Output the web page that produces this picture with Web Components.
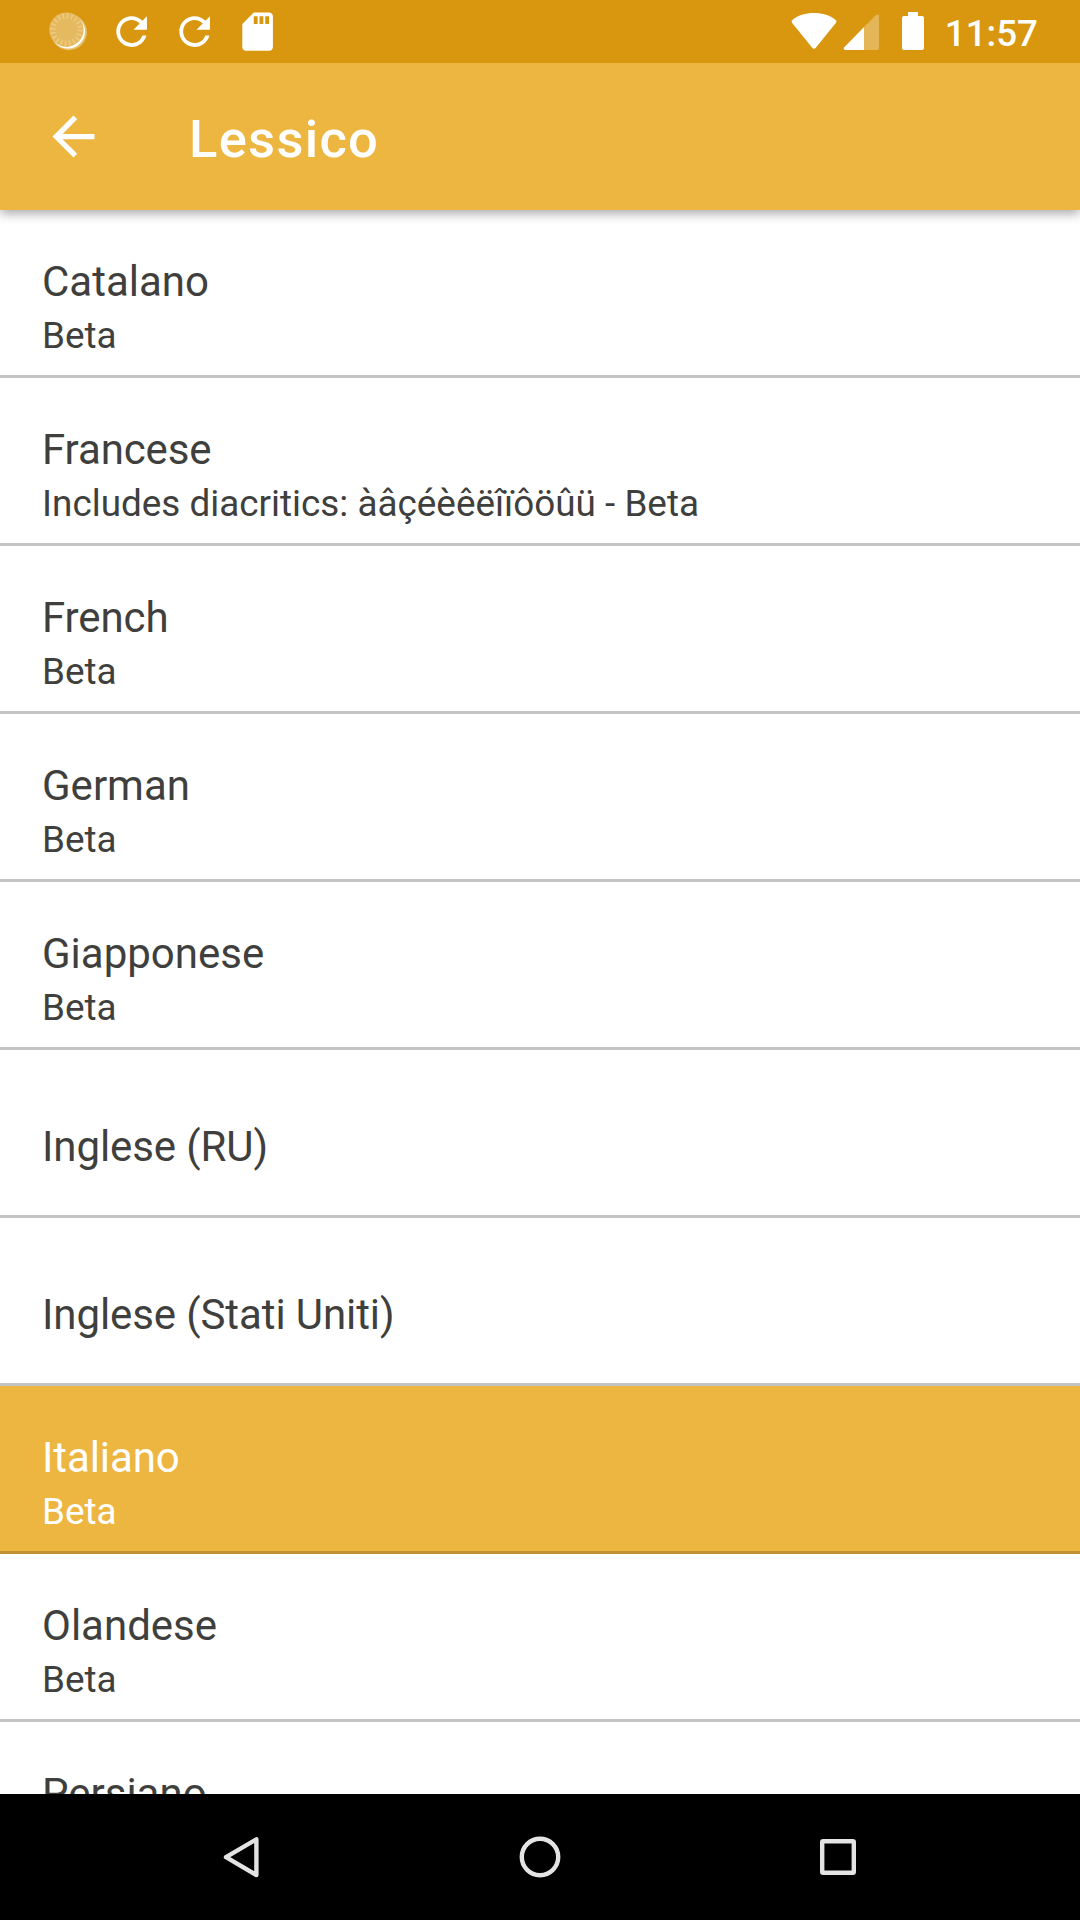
<!DOCTYPE html>
<html lang="it">
<head>
<meta charset="utf-8">
<title>Lessico</title>
<style>
html,body{margin:0;height:100%;overflow:hidden;background:#fff}
body{font-family:Roboto,"Noto Sans",sans-serif}
</style>
</head>
<body>
<lex-screen></lex-screen>
<script>
const define = (name, html) => customElements.define(name, class extends HTMLElement {
  constructor() {
    super();
    const t = document.createElement('template');
    t.innerHTML = html;
    this.attachShadow({ mode: 'open' }).appendChild(t.content.cloneNode(true));
  }
});

define('refresh-icon', `<style>:host{display:block;width:46px;height:46px}svg{display:block}</style>
<svg width="46" height="46" viewBox="0 0 24 24" fill="#fff"><path d="M17.65 6.35C16.2 4.9 14.21 4 12 4c-4.42 0-7.99 3.58-7.99 8s3.57 8 7.99 8c3.73 0 6.84-2.55 7.73-6h-2.08c-.82 2.33-3.04 4-5.65 4-3.31 0-6-2.69-6-6s2.69-6 6-6c1.66 0 3.14.69 4.22 1.78L13 11h7V4z"/></svg>`);

define('dial-icon', `<style>:host{display:block;width:46px;height:46px}svg{display:block}</style>
<svg width="46" height="46" viewBox="0 0 46 46">
<circle cx="23.3" cy="23.6" r="18" fill="#fff" opacity=".4"/>
<circle cx="22.300" cy="22.8" r="17.2" fill="#fff"/>
<circle cx="20.8" cy="21.1" r="17.2" fill="#e5b95f"/>
<circle cx="20.8" cy="21.1" r="13.6" fill="none" stroke="#eecb83" stroke-width="5.500" stroke-dasharray="1.500 2.773"/>
</svg>`);

define('status-bar', `<style>
:host{display:flex;box-sizing:border-box;height:63px;flex:none;background:#d8970f;padding:8px 42px 0 45px;justify-content:space-between;align-items:flex-start;position:relative;z-index:2}
.l{display:flex;gap:17px;transform:translate(.6px,.6px)}.r{display:flex;align-items:flex-start}
svg{display:block}
.t{font-size:36.75px;font-weight:500;line-height:43px;color:#fff;margin:4px 0 0 18.6px}
</style>
<div class="l"><dial-icon></dial-icon><refresh-icon></refresh-icon><refresh-icon></refresh-icon>
<svg width="46" height="46" viewBox="0 0 24 24" fill="#fff"><path d="M18 2h-8L4.02 8 4 20c0 1.1.9 2 2 2h12c1.1 0 2-.9 2-2V4c0-1.1-.9-2-2-2zm-6 6h-2V4h2v4zm3 0h-2V4h2v4zm3 0h-2V4h2v4z"/></svg></div>
<div class="r"><svg width="136" height="46" viewBox="790 8 136 46" fill="#fff">
<path d="M792.2 20.2C797.5 15.5 805.4 13 814 13s16.500 2.500 21.800 7.200q1.200 1.200 .2 2.500L815.600 48q-1.600 1.600-3.200 0L792 22.700q-1-1.300 .2-2.500z"/>
<path d="M864 27V50H845q-2.200-.8-.7-2.700z"/><path d="M864 27 875.500 15.500Q879 13.300 879 16.500V48q0 2-2 2H864z" opacity=".3"/>
<path d="M908 12h10v4h4q2 0 2 2v30q0 2-2 2h-18q-2 0-2-2V18q0-2 2-2h4z"/></svg><div class="t">11:57</div></div>`);

define('app-bar', `<style>
:host{display:flex;height:147px;flex:none;background:#edb641;align-items:center;box-shadow:0 4px 10px rgba(0,0,0,.32);z-index:1;position:relative;box-sizing:border-box;padding-left:42px}
svg{display:block;width:63px;height:63px}
h1{margin:4px 0 0 84px;font-size:52.5px;line-height:62px;font-weight:500;color:#fff;letter-spacing:1.3px}
</style>
<svg viewBox="0 0 24 24" fill="#fff"><path d="M20 11H7.830l5.590-5.590L12 4l-8 8 8 8 1.410-1.410L7.830 13H20v-2z"/></svg><h1><slot></slot></h1>`);

define('lex-row', `<style>
:host{display:flex;flex-direction:column;flex:none;box-sizing:border-box;height:168px;padding:47px 42px 0;gap:8px;border-bottom:3px solid #c4c4c4;color:#3f3f3e;background:#fff}
:host([plain]){padding-top:72px}
:host([selected]){background:#edb641;color:#fff;border-color:#be9234}
.a{font-size:42px;line-height:49px}
:host([tight]) .a{letter-spacing:-.1px}
::slotted([slot=note]){font-size:36.86px;line-height:43px}
</style><div class="a"><slot></slot></div><slot name="note"></slot>`);

define('nav-bar', `<style>
:host{display:flex;height:126px;flex:none;background:#000}
svg{display:block}
</style><svg width="1080" height="126" viewBox="0 0 1080 126" fill="none" stroke="#e4e4e4" stroke-width="4.400" stroke-linejoin="round">
<path d="M256.400 45.300V81L226 63.200z"/><circle cx="540" cy="63" r="18.200"/><rect x="822.200" y="47.200" width="31.600" height="31.600" rx="1"/></svg>`);

define('lex-screen', `<style>
:host{display:flex;flex-direction:column;width:1080px;height:1920px;overflow:hidden}
main{flex:1;min-height:0;overflow:hidden;display:flex;flex-direction:column}
</style>
<status-bar></status-bar><app-bar>Lessico</app-bar>
<main>
<lex-row>Catalano<div slot="note">Beta</div></lex-row>
<lex-row tight>Francese<div slot="note">Includes diacritics: àâçéèêëîïôöûü - Beta</div></lex-row>
<lex-row tight>French<div slot="note">Beta</div></lex-row>
<lex-row>German<div slot="note">Beta</div></lex-row>
<lex-row>Giapponese<div slot="note">Beta</div></lex-row>
<lex-row plain tight>Inglese (RU)</lex-row>
<lex-row plain tight>Inglese (Stati Uniti)</lex-row>
<lex-row selected tight>Italiano<div slot="note">Beta</div></lex-row>
<lex-row>Olandese<div slot="note">Beta</div></lex-row>
<lex-row>Persiano</lex-row>
</main>
<nav-bar></nav-bar>`);
</script>
</body>
</html>
